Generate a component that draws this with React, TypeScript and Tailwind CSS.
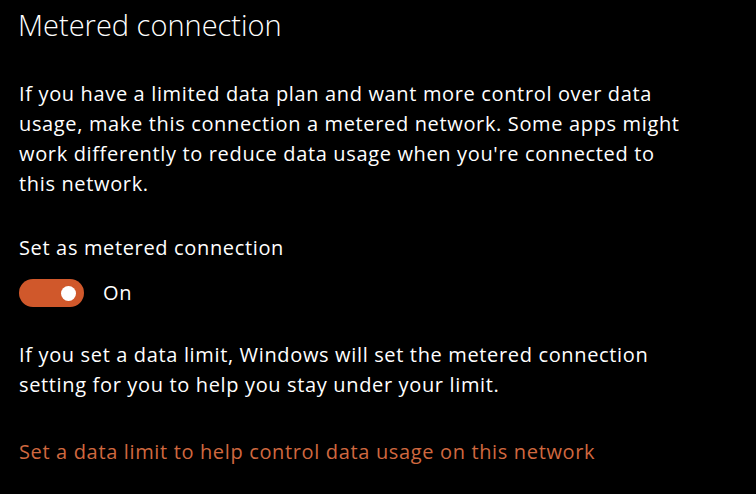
export default function App() {
  return (
    <div
      className="w-[756px] h-[494px] overflow-hidden bg-black text-white pl-[19px]"
      style={{ fontFamily: '"Open Sans", "Noto Sans", sans-serif' }}
    >
      <h1 className="text-[29px] leading-[36px] font-light pt-[7px] -ml-[1px] whitespace-nowrap">Metered connection</h1>

      <div className="text-[20px] leading-[30px] tracking-[0.65px] whitespace-nowrap">
        <p className="mt-[36px]">
          <span className="block">If you have a limited data plan and want more control over data</span>
          <span className="block">usage, make this connection a metered network. Some apps might</span>
          <span className="block">work differently to reduce data usage when you're connected to</span>
          <span className="block">this network.</span>
        </p>

        <div className="mt-[34px]">Set as metered connection</div>

        <div className="mt-[15px] flex items-center gap-[19px]">
          <div className="w-[65px] h-[28px] rounded-full bg-[#d0582b] flex items-center justify-end pr-[8px]">
            <div className="w-[15px] h-[15px] rounded-full bg-white" />
          </div>
          <span>On</span>
        </div>

        <p className="mt-[32px]">
          <span className="block">If you set a data limit, Windows will set the metered connection</span>
          <span className="block">setting for you to help you stay under your limit.</span>
        </p>

        <a className="block mt-[37px] text-[#d0683f]">
          Set a data limit to help control data usage on this network
        </a>
      </div>
    </div>
  );
}
